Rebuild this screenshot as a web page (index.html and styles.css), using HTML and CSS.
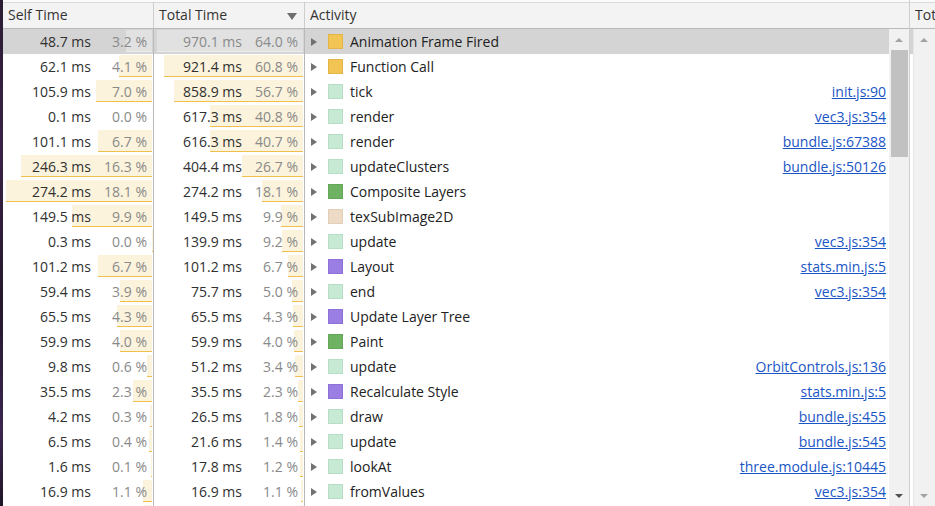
FILE: index.html
```html
<!DOCTYPE html>
<html>
<head>
<meta charset="utf-8">
<link rel="stylesheet" href="styles.css">
</head>
<body>
<div class="wall"></div>
<div class="panel">
  <div class="header">
    <div class="hcell">Self Time</div>
    <div class="hcell sorted">Total Time<span class="sort"></span></div>
    <div class="hcell act">Activity</div>
  </div>
  <div class="body">
    <div class="rows">
      <div class="row selected">
        <div class="cell"><div class="bar" style="width:25.9px"></div><span class="ms">48.7 ms</span><span class="pct">3.2 %</span></div>
        <div class="cell"><div class="bar" style="width:146px"></div><span class="ms">970.1 ms</span><span class="pct">64.0 %</span></div>
        <div class="activity"><span class="arrow"></span><span class="sq yellow"></span><span class="name">Animation Frame Fired</span></div>
      </div>
      <div class="row">
        <div class="cell"><div class="bar" style="width:33px"></div><span class="ms">62.1 ms</span><span class="pct">4.1 %</span></div>
        <div class="cell"><div class="bar" style="width:138.7px"></div><span class="ms">921.4 ms</span><span class="pct">60.8 %</span></div>
        <div class="activity"><span class="arrow"></span><span class="sq yellow"></span><span class="name">Function Call</span></div>
      </div>
      <div class="row">
        <div class="cell"><div class="bar" style="width:56.4px"></div><span class="ms">105.9 ms</span><span class="pct">7.0 %</span></div>
        <div class="cell"><div class="bar" style="width:129.3px"></div><span class="ms">858.9 ms</span><span class="pct">56.7 %</span></div>
        <div class="activity"><span class="arrow"></span><span class="sq js"></span><span class="name">tick</span><a class="link" href="#">init.js:90</a></div>
      </div>
      <div class="row">
        <div class="cell"><div class="bar" style="width:0.05px"></div><span class="ms">0.1 ms</span><span class="pct">0.0 %</span></div>
        <div class="cell"><div class="bar" style="width:92.9px"></div><span class="ms">617.3 ms</span><span class="pct">40.8 %</span></div>
        <div class="activity"><span class="arrow"></span><span class="sq js"></span><span class="name">render</span><a class="link" href="#">vec3.js:354</a></div>
      </div>
      <div class="row">
        <div class="cell"><div class="bar" style="width:53.8px"></div><span class="ms">101.1 ms</span><span class="pct">6.7 %</span></div>
        <div class="cell"><div class="bar" style="width:92.7px"></div><span class="ms">616.3 ms</span><span class="pct">40.7 %</span></div>
        <div class="activity"><span class="arrow"></span><span class="sq js"></span><span class="name">render</span><a class="link" href="#">bundle.js:67388</a></div>
      </div>
      <div class="row">
        <div class="cell"><div class="bar" style="width:131.1px"></div><span class="ms">246.3 ms</span><span class="pct">16.3 %</span></div>
        <div class="cell"><div class="bar" style="width:60.9px"></div><span class="ms">404.4 ms</span><span class="pct">26.7 %</span></div>
        <div class="activity"><span class="arrow"></span><span class="sq js"></span><span class="name">updateClusters</span><a class="link" href="#">bundle.js:50126</a></div>
      </div>
      <div class="row">
        <div class="cell"><div class="bar" style="width:146px"></div><span class="ms">274.2 ms</span><span class="pct">18.1 %</span></div>
        <div class="cell"><div class="bar" style="width:41.3px"></div><span class="ms">274.2 ms</span><span class="pct">18.1 %</span></div>
        <div class="activity"><span class="arrow"></span><span class="sq green"></span><span class="name">Composite Layers</span></div>
      </div>
      <div class="row">
        <div class="cell"><div class="bar" style="width:79.6px"></div><span class="ms">149.5 ms</span><span class="pct">9.9 %</span></div>
        <div class="cell"><div class="bar" style="width:22.5px"></div><span class="ms">149.5 ms</span><span class="pct">9.9 %</span></div>
        <div class="activity"><span class="arrow"></span><span class="sq beige"></span><span class="name">texSubImage2D</span></div>
      </div>
      <div class="row">
        <div class="cell"><div class="bar" style="width:0.2px"></div><span class="ms">0.3 ms</span><span class="pct">0.0 %</span></div>
        <div class="cell"><div class="bar" style="width:21.1px"></div><span class="ms">139.9 ms</span><span class="pct">9.2 %</span></div>
        <div class="activity"><span class="arrow"></span><span class="sq js"></span><span class="name">update</span><a class="link" href="#">vec3.js:354</a></div>
      </div>
      <div class="row">
        <div class="cell"><div class="bar" style="width:53.9px"></div><span class="ms">101.2 ms</span><span class="pct">6.7 %</span></div>
        <div class="cell"><div class="bar" style="width:15.2px"></div><span class="ms">101.2 ms</span><span class="pct">6.7 %</span></div>
        <div class="activity"><span class="arrow"></span><span class="sq purple"></span><span class="name">Layout</span><a class="link" href="#">stats.min.js:5</a></div>
      </div>
      <div class="row">
        <div class="cell"><div class="bar" style="width:31.6px"></div><span class="ms">59.4 ms</span><span class="pct">3.9 %</span></div>
        <div class="cell"><div class="bar" style="width:11.4px"></div><span class="ms">75.7 ms</span><span class="pct">5.0 %</span></div>
        <div class="activity"><span class="arrow"></span><span class="sq js"></span><span class="name">end</span><a class="link" href="#">vec3.js:354</a></div>
      </div>
      <div class="row">
        <div class="cell"><div class="bar" style="width:34.9px"></div><span class="ms">65.5 ms</span><span class="pct">4.3 %</span></div>
        <div class="cell"><div class="bar" style="width:9.9px"></div><span class="ms">65.5 ms</span><span class="pct">4.3 %</span></div>
        <div class="activity"><span class="arrow"></span><span class="sq purple"></span><span class="name">Update Layer Tree</span></div>
      </div>
      <div class="row">
        <div class="cell"><div class="bar" style="width:31.9px"></div><span class="ms">59.9 ms</span><span class="pct">4.0 %</span></div>
        <div class="cell"><div class="bar" style="width:9px"></div><span class="ms">59.9 ms</span><span class="pct">4.0 %</span></div>
        <div class="activity"><span class="arrow"></span><span class="sq green"></span><span class="name">Paint</span></div>
      </div>
      <div class="row">
        <div class="cell"><div class="bar" style="width:5.2px"></div><span class="ms">9.8 ms</span><span class="pct">0.6 %</span></div>
        <div class="cell"><div class="bar" style="width:7.7px"></div><span class="ms">51.2 ms</span><span class="pct">3.4 %</span></div>
        <div class="activity"><span class="arrow"></span><span class="sq js"></span><span class="name">update</span><a class="link" href="#">OrbitControls.js:136</a></div>
      </div>
      <div class="row">
        <div class="cell"><div class="bar" style="width:18.9px"></div><span class="ms">35.5 ms</span><span class="pct">2.3 %</span></div>
        <div class="cell"><div class="bar" style="width:5.3px"></div><span class="ms">35.5 ms</span><span class="pct">2.3 %</span></div>
        <div class="activity"><span class="arrow"></span><span class="sq purple"></span><span class="name">Recalculate Style</span><a class="link" href="#">stats.min.js:5</a></div>
      </div>
      <div class="row">
        <div class="cell"><div class="bar" style="width:2.2px"></div><span class="ms">4.2 ms</span><span class="pct">0.3 %</span></div>
        <div class="cell"><div class="bar" style="width:4px"></div><span class="ms">26.5 ms</span><span class="pct">1.8 %</span></div>
        <div class="activity"><span class="arrow"></span><span class="sq js"></span><span class="name">draw</span><a class="link" href="#">bundle.js:455</a></div>
      </div>
      <div class="row">
        <div class="cell"><div class="bar" style="width:3.5px"></div><span class="ms">6.5 ms</span><span class="pct">0.4 %</span></div>
        <div class="cell"><div class="bar" style="width:3.3px"></div><span class="ms">21.6 ms</span><span class="pct">1.4 %</span></div>
        <div class="activity"><span class="arrow"></span><span class="sq js"></span><span class="name">update</span><a class="link" href="#">bundle.js:545</a></div>
      </div>
      <div class="row">
        <div class="cell"><div class="bar" style="width:0.9px"></div><span class="ms">1.6 ms</span><span class="pct">0.1 %</span></div>
        <div class="cell"><div class="bar" style="width:2.7px"></div><span class="ms">17.8 ms</span><span class="pct">1.2 %</span></div>
        <div class="activity"><span class="arrow"></span><span class="sq js"></span><span class="name">lookAt</span><a class="link" href="#">three.module.js:10445</a></div>
      </div>
      <div class="row">
        <div class="cell"><div class="bar" style="width:9px"></div><span class="ms">16.9 ms</span><span class="pct">1.1 %</span></div>
        <div class="cell"><div class="bar" style="width:2.5px"></div><span class="ms">16.9 ms</span><span class="pct">1.1 %</span></div>
        <div class="activity"><span class="arrow"></span><span class="sq js"></span><span class="name">fromValues</span><a class="link" href="#">vec3.js:354</a></div>
      </div>
      <div class="row">
        <div class="cell"><div class="bar" style="width:8px"></div></div>
        <div class="cell"><div class="bar" style="width:3px"></div></div>
        <div class="activity"></div>
      </div>
    </div>
    <div class="vscroll">
      <span class="sarrow up"></span>
      <div class="thumb"></div>
      <span class="sarrow down dark"></span>
    </div>
  </div>
</div>
<div class="side">
  <div class="sheader">Tot</div>
  <div class="sbody">
    <div class="sstrip"><div class="sstrip-sel"></div></div>
    <div class="vscroll side-scroll">
      <span class="sarrow up"></span>
      <span class="sarrow down"></span>
    </div>
  </div>
</div>
</body>
</html>
```

FILE: styles.css
```css
* { box-sizing: border-box; }
html, body {
  margin: 0;
  padding: 0;
  height: 506px;
  overflow: hidden;
}
body {
  display: flex;
  font-family: "Open Sans", "Noto Sans", sans-serif;
  font-size: 14px;
  color: #303030;
  background: #fff;
}
.wall {
  width: 3px;
  flex: none;
  background: linear-gradient(180deg, #2a1c33 0%, #3a2246 30%, #24182c 60%, #3b2650 85%, #1f1626 100%);
}
.panel {
  width: 907px;
  flex: none;
  display: flex;
  flex-direction: column;
  border-right: 1px solid #cfcfcf;
}
.header {
  height: 29px;
  flex: none;
  display: grid;
  grid-template-columns: 151px 151px 1fr;
  border-top: 2px solid #fafafa;
  border-bottom: 1px solid #b9b9b9;
  background: #f3f3f3;
  box-shadow: inset 0 1px 0 #dadada;
}
.hcell {
  border-right: 1px solid #cdcdcd;
  padding-left: 5px;
  line-height: 26px;
  color: #333;
  font-size: 14px;
  position: relative;
}
.hcell.act { border-right: none; }
.sort {
  position: absolute;
  right: 7px;
  top: 11px;
  width: 0;
  height: 0;
  border-left: 5px solid transparent;
  border-right: 5px solid transparent;
  border-top: 7px solid #6e6e6e;
}
.body {
  flex: 1;
  display: flex;
  min-height: 0;
}
.rows {
  flex: 1;
  overflow: hidden;
  display: flex;
  flex-direction: column;
}
.row {
  height: 25px;
  flex: none;
  display: grid;
  grid-template-columns: 151px 151px 1fr;
}
.cell {
  position: relative;
  border-right: 1px solid #b8b8b8;
  display: flex;
  line-height: 25px;
}
.bar {
  position: absolute;
  right: 1px;
  top: 1px;
  height: 22px;
  background: #fcf3dc;
  border-bottom: 1px solid #f1c04c;
}
.ms, .pct {
  position: relative;
  text-align: right;
  white-space: nowrap;
}
.ms { width: 88px; color: #303030; }
.pct { width: 56px; color: #898989; }
.row.selected { background: #d4d4d4; }
.row.selected .bar {
  background: #e1e1e1;
  border-bottom-color: #ececec;
}
.row.selected .cell:nth-child(2) .ms,
.row.selected .cell:nth-child(2) .pct { color: #8a8a8a; }
.activity {
  display: flex;
  align-items: center;
  padding-left: 6px;
  padding-right: 3px;
  line-height: 25px;
  color: #222;
  min-width: 0;
}
.arrow {
  width: 0;
  height: 0;
  border-top: 4px solid transparent;
  border-bottom: 4px solid transparent;
  border-left: 6px solid #727272;
  flex: none;
}
.sq {
  width: 15px;
  height: 15px;
  margin-left: 11px;
  margin-right: 7px;
  border: 1px solid;
  flex: none;
}
.sq.yellow { background: #f1c453; border-color: #e3b548; }
.sq.js { background: #c6ead4; border-color: #b6dec6; }
.sq.green { background: #6fb264; border-color: #63a858; }
.sq.beige { background: #eedbc6; border-color: #e2cfba; }
.sq.purple { background: #9a7ee4; border-color: #8d70d8; }
.name { white-space: nowrap; }
.link {
  margin-left: auto;
  color: #1a55c6;
  text-decoration: underline;
  white-space: nowrap;
}
.vscroll {
  width: 20px;
  flex: none;
  background: #f1f1f1;
  position: relative;
  display: flex;
  flex-direction: column;
  align-items: center;
}
.thumb {
  position: absolute;
  left: 2px;
  top: 21px;
  width: 17px;
  height: 107px;
  background: #c1c1c1;
}
.sarrow {
  position: absolute;
  left: 6px;
  width: 0;
  height: 0;
  border-left: 4px solid transparent;
  border-right: 4px solid transparent;
}
.sarrow.up { top: 9px; border-bottom: 4px solid #a3a3a3; }
.sarrow.down { bottom: 8px; border-top: 4px solid #a3a3a3; }
.sarrow.dark { border-top-color: #505050; }
.side {
  flex: 1;
  display: flex;
  flex-direction: column;
  min-width: 0;
}
.sheader {
  height: 29px;
  flex: none;
  border-top: 2px solid #fafafa;
  border-bottom: 1px solid #b9b9b9;
  background: #f3f3f3;
  box-shadow: inset 0 1px 0 #dadada;
  padding-left: 5px;
  line-height: 26px;
  color: #333;
  white-space: nowrap;
  overflow: hidden;
}
.sbody {
  flex: 1;
  display: flex;
}
.sstrip {
  width: 3px;
  flex: none;
  background: #fff;
}
.sstrip-sel {
  height: 25px;
  background: #d4d4d4;
}
.side-scroll {
  flex: 1;
  width: auto;
  border-left: 1px solid #e6e6e6;
}
.side-scroll .sarrow { left: 6px; }
```
